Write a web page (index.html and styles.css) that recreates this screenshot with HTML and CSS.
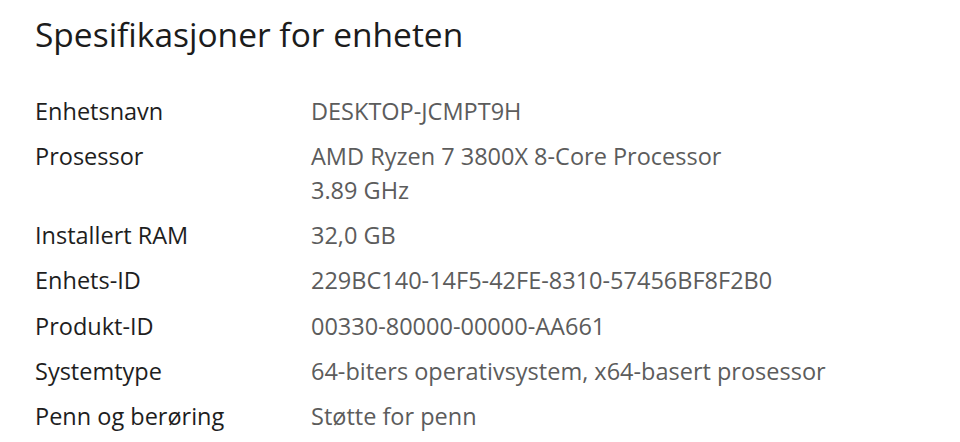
FILE: index.html
```html
<!DOCTYPE html>
<html lang="nb">
<head>
<meta charset="utf-8">
<title>Spesifikasjoner for enheten</title>
<link rel="stylesheet" href="styles.css">
</head>
<body>
<main class="specs">
  <h1 class="specs-title">Spesifikasjoner for enheten</h1>
  <dl class="specs-list">
    <div class="spec-row"><dt class="spec-label">Enhetsnavn</dt><dd class="spec-value">DESKTOP-JCMPT9H</dd></div>
    <div class="spec-row"><dt class="spec-label">Prosessor</dt><dd class="spec-value">AMD Ryzen 7 3800X 8-Core Processor<br>3.89 GHz</dd></div>
    <div class="spec-row"><dt class="spec-label">Installert RAM</dt><dd class="spec-value">32,0 GB</dd></div>
    <div class="spec-row"><dt class="spec-label">Enhets-ID</dt><dd class="spec-value">229BC140-14F5-42FE-8310-57456BF8F2B0</dd></div>
    <div class="spec-row"><dt class="spec-label">Produkt-ID</dt><dd class="spec-value">00330-80000-00000-AA661</dd></div>
    <div class="spec-row"><dt class="spec-label">Systemtype</dt><dd class="spec-value">64-biters operativsystem, x64-basert prosessor</dd></div>
    <div class="spec-row"><dt class="spec-label">Penn og berøring</dt><dd class="spec-value">Støtte for penn</dd></div>
  </dl>
</main>
</body>
</html>
```

FILE: styles.css
```css
html, body {
  margin: 0;
  padding: 0;
  background: #ffffff;
}
body {
  font-family: "Open Sans", "Noto Sans", sans-serif;
  color: #1f1f1f;
}
.specs {
  padding: 14px 0 0 35px;
}
.specs-title {
  margin: 0;
  font-size: 33.5px;
  font-weight: 400;
  line-height: 40px;
  color: #1c1c1c;
}
.specs-list {
  margin: 41px 0 0 0;
  display: flex;
  flex-direction: column;
  gap: 11.8px;
}
.spec-row {
  display: flex;
  font-size: 23.5px;
  line-height: 33.5px;
}
.spec-label {
  width: 276px;
  flex: none;
  color: #1e1e1e;
}
.spec-value {
  margin: 0;
  color: #5c5c5c;
}
```
